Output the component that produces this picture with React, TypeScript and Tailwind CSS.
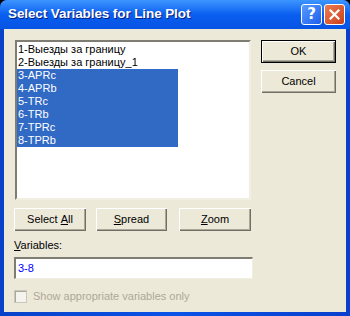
import React from 'react';

const font = { fontFamily: '"Liberation Sans", Arial, sans-serif' };

const items = [
  { label: '1-Выезды за границу', selected: false },
  { label: '2-Выезды за границу_1', selected: false },
  { label: '3-APRc', selected: true },
  { label: '4-APRb', selected: true },
  { label: '5-TRc', selected: true },
  { label: '6-TRb', selected: true },
  { label: '7-TPRc', selected: true },
  { label: '8-TPRb', selected: true },
];

const Button: React.FC<{ w: string; isDefault?: boolean; children: React.ReactNode }> = ({ w, isDefault, children }) => (
  <div
    className={`${w} h-[23px] flex items-center justify-center text-[11px] text-black bg-[#ECE9D8] ${
      isDefault
        ? 'border border-black shadow-[inset_1px_1px_0_#fff,inset_-1px_-1px_0_#716F64,inset_-2px_-2px_0_#ACA899]'
        : 'shadow-[inset_1px_1px_0_#fff,inset_-1px_-1px_0_#716F64,inset_-2px_-2px_0_#ACA899]'
    }`}
  >
    {children}
  </div>
);

export default function App() {
  return (
    <div className="w-[350px] h-[316px] bg-black" style={font}>
      <div className="w-[350px] h-[316px] flex flex-col rounded-t-[7px] bg-gradient-to-r from-[#0842C8] via-[#0A52E8] to-[#0A3FCC] overflow-hidden">
        {/* title bar */}
        <div className="h-[29px] flex items-center pl-[8px] pr-[5px] bg-gradient-to-b from-[#3D95FF] via-[#0A5EF0] to-[#0654E4]">
          <div
            className="flex-1 text-white font-bold text-[13.5px] [text-shadow:1px_1px_0_#0A1E80]"
            style={{ fontFamily: '"Liberation Sans", Arial, sans-serif', letterSpacing: '-0.1px' }}
          >
            Select Variables for Line Plot
          </div>
          <div className="flex gap-[2px]">
            <div className="w-[21px] h-[21px] rounded-[3px] border border-white bg-gradient-to-br from-[#5A9AFF] to-[#1C5EEB] flex items-center justify-center text-white font-bold text-[15px]" style={{ fontFamily: '"DejaVu Sans", sans-serif' }}>
              ?
            </div>
            <div className="w-[21px] h-[21px] rounded-[3px] border border-white bg-gradient-to-br from-[#EE7A50] to-[#C9401A] flex items-center justify-center">
              <svg width="11" height="11" viewBox="0 0 11 11">
                <path d="M1.5 1.5 L9.5 9.5 M9.5 1.5 L1.5 9.5" stroke="#fff" strokeWidth="2.2" strokeLinecap="square" />
              </svg>
            </div>
          </div>
        </div>

        {/* body */}
        <div className="flex-1 mx-[4px] mb-[4px] bg-[#ECE9D8] pl-[10px] pt-[11px]">
          <div className="flex">
            <div className="ml-[1px] w-[236px] h-[160px] bg-white border-t-2 border-l-2 border-t-[#7F7D73] border-l-[#7F7D73] border-r-2 border-b-2 border-r-[#F1EFE2] border-b-[#F1EFE2] pt-[1px]">
              {items.map((it) => (
                <div
                  key={it.label}
                  className={`h-[13px] leading-[13px] text-[11px] pl-[1px] w-[161px] whitespace-nowrap ${
                    it.selected ? 'bg-[#316AC5] text-white' : 'text-black'
                  }`}
                >
                  {it.label}
                </div>
              ))}
            </div>
            <div className="ml-[10px] flex flex-col gap-[7px]">
              <Button w="w-[75px]" isDefault>
                OK
              </Button>
              <Button w="w-[75px]">Cancel</Button>
            </div>
          </div>

          <div className="flex mt-[8px]">
            <Button w="w-[72px]">
              Select <span className="underline ml-[3px]">A</span>ll
            </Button>
            <div className="ml-[10px]">
              <Button w="w-[71px]">
                <span className="underline">S</span>pread
              </Button>
            </div>
            <div className="ml-[12px]">
              <Button w="w-[72px]">
                <span className="underline">Z</span>oom
              </Button>
            </div>
          </div>

          <div className="mt-[8px] h-[13px] leading-[13px] text-[11px] text-black">
            <span className="underline">V</span>ariables:
          </div>
          <div className="mt-[5px] w-[239px] h-[22px] bg-white border-t-2 border-l-2 border-t-[#7F7D73] border-l-[#7F7D73] border-r border-b border-r-[#F1EFE2] border-b-[#F1EFE2] flex items-center pl-[2px] text-[11px] text-[#0000FF]">
            3-8
          </div>

          <div className="mt-[9px] flex items-center">
            <div className="w-[13px] h-[13px] border border-[#CAC8BB] bg-[#F4F3EE] shadow-[inset_1px_1px_0_#ACA899]" />
            <span className="ml-[6px] text-[11px] text-[#ACA899]">Show appropriate variables only</span>
          </div>
        </div>
      </div>
    </div>
  );
}
